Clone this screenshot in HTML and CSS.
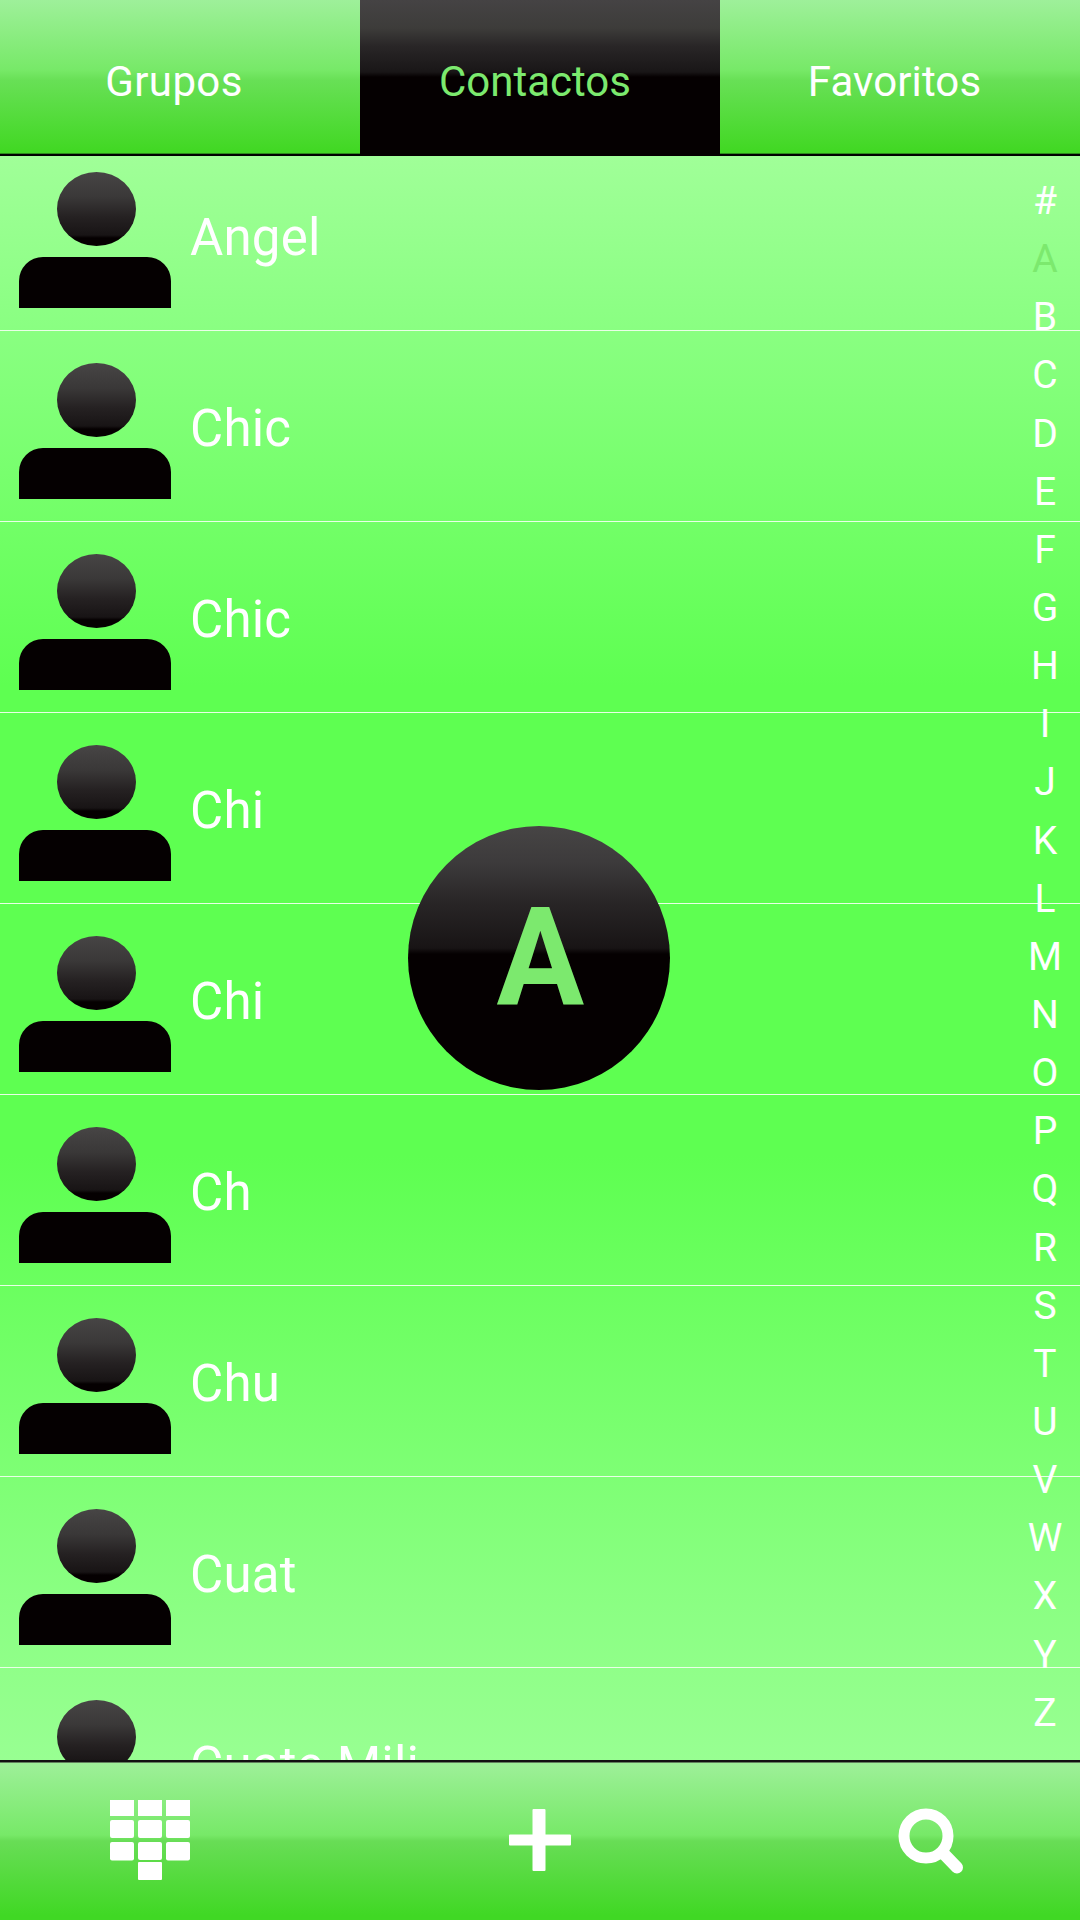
FILE: index.html
```html
<!DOCTYPE html>
<html lang="es">
<head>
    <meta charset="UTF-8">
    <meta name="viewport" content="width=device-width, initial-scale=1.0">
    <title>Contactos</title>
    <link rel="stylesheet" href="styles.css">
</head>

<body>
    <div class="app">
        <nav class="tabs">
            <a class="tab"><span class="grupos">Grupos</span></a>
            <a class="tab active"><span class="contactos">Contactos</span></a>
            <a class="tab"><span class="favoritos">Favoritos</span></a>
        </nav>

        <main class="content">
            <ul class="contacts">
                <li><div class="avatar"><i class="head"></i><i class="torso"></i></div><span>Angel</span></li>
                <li><div class="avatar"><i class="head"></i><i class="torso"></i></div><span>Chic</span></li>
                <li><div class="avatar"><i class="head"></i><i class="torso"></i></div><span>Chic</span></li>
                <li><div class="avatar"><i class="head"></i><i class="torso"></i></div><span>Chi</span></li>
                <li><div class="avatar"><i class="head"></i><i class="torso"></i></div><span>Chi</span></li>
                <li><div class="avatar"><i class="head"></i><i class="torso"></i></div><span>Ch</span></li>
                <li><div class="avatar"><i class="head"></i><i class="torso"></i></div><span>Chu</span></li>
                <li><div class="avatar"><i class="head"></i><i class="torso"></i></div><span>Cuat</span></li>
                <li><div class="avatar"><i class="head"></i><i class="torso"></i></div><span>Cuate Mili</span></li>
            </ul>

            <!-- alphabet index -->
            <ul class="letters">
                <li>#</li>
                <li class="current">A</li>
                <li>B</li>
                <li>C</li>
                <li>D</li>
                <li>E</li>
                <li>F</li>
                <li>G</li>
                <li>H</li>
                <li>I</li>
                <li>J</li>
                <li>K</li>
                <li>L</li>
                <li>M</li>
                <li>N</li>
                <li>O</li>
                <li>P</li>
                <li>Q</li>
                <li>R</li>
                <li>S</li>
                <li>T</li>
                <li>U</li>
                <li>V</li>
                <li>W</li>
                <li>X</li>
                <li>Y</li>
                <li>Z</li>
            </ul>

            <div class="bubble"><span>A</span></div>
        </main>

        <footer class="toolbar">
            <svg width="80" height="80" viewBox="0 0 80 80" fill="#fff">
                <path d="M0 0h24v16H0zM28 0h24v16H28zM56 0h24v16H56z"/>
                <rect x="0" y="20" width="24" height="18" rx="2"/>
                <rect x="28" y="20" width="24" height="18" rx="2"/>
                <rect x="56" y="20" width="24" height="18" rx="2"/>
                <rect x="0" y="42" width="24" height="18.5" rx="2"/>
                <rect x="28" y="42" width="24" height="18" rx="2"/>
                <rect x="56" y="42" width="24" height="18.5" rx="2"/>
                <rect x="28" y="62" width="24" height="18" rx="1"/>
            </svg>
            <svg width="80" height="80" viewBox="0 0 80 80" fill="#fff">
                <rect x="9" y="34.5" width="62" height="11" rx="1"/>
                <rect x="32.5" y="9" width="13" height="62" rx="1"/>
            </svg>
            <svg width="80" height="80" viewBox="0 0 80 80" fill="none" stroke="#fff">
                <circle cx="36" cy="36" r="22" stroke-width="11"/>
                <path d="M53 53L67 67.5" stroke-width="12" stroke-linecap="round"/>
            </svg>
        </footer>
    </div>
</body>

</html>
```
FILE: styles.css
```css
* {
    margin: 0;
    padding: 0;
    box-sizing: border-box;
}

body {
    font-family: Roboto, "Liberation Sans", sans-serif;
    color: #fff;
}

ul {
    list-style: none;
}

.app {
    width: 1080px;
    height: 1920px;
    display: flex;
    flex-direction: column;
    overflow: hidden;
}

/* top tabs */
.tabs {
    height: 156px;
    display: flex;
    background: linear-gradient(#9ef09a 0, #92ee8a 22px, #77e968 70px, #68e056 80px, #42d824 150px);
}

.tab {
    flex: 1;
    padding-top: 57px;
    border-bottom: 2px solid #000;
    box-shadow: inset 0 -1px #2b8c1a;
    font-size: 42px;
    line-height: 50px;
    text-align: center;
}

.tab span {
    display: inline-block;
}

.grupos {
    letter-spacing: 0.4px;
    margin-right: 12px;
}

.contactos {
    margin-right: 10px;
}

.favoritos {
    letter-spacing: 0.1px;
    margin-right: 11px;
}

.tab.active {
    color: #7ce96e;
    background: linear-gradient(#454344 0, #3d3c3a 28px, #292627 46px, #191617 72px, #050001 77px);
    border-color: #050001;
    box-shadow: none;
}

/* contact list */
.content {
    height: 1604px;
    position: relative;
    overflow: hidden;
    background: linear-gradient(#a0ff98 0, #8aff82 170px, #5eff51 530px, #5eff51 1000px, #8aff82 1440px, #98ff92 1604px);
}

.contacts {
    margin-top: -16px;
}

.contacts li {
    height: 191px;
    display: flex;
    align-items: flex-start;
    padding: 32px 0 0 19px;
    border-bottom: 1px solid #e9ffe7;
}

.contacts span {
    margin: 36px 0 0 19px;
    font-size: 51px;
    line-height: 60px;
    letter-spacing: 0.2px;
}

.avatar {
    width: 152px;
}

.head {
    display: block;
    width: 79px;
    height: 74px;
    margin: 0 auto 11px 37.5px;
    border-radius: 50%;
    background: linear-gradient(#474545 0, #3a3838 25px, #252122 45px, #181415 63px, #050001 66px);
}

.torso {
    display: block;
    height: 51px;
    border-radius: 24px 24px 0 0;
    background: #050001;
}

.letters {
    position: absolute;
    top: 16px;
    right: 0;
    width: 70px;
    font-size: 39px;
    text-align: center;
}

.letters li {
    height: 58.15px;
    line-height: 58.15px;
}

.letters .current {
    color: #7ce96e;
}

.bubble {
    position: absolute;
    top: 670px;
    left: 408px;
    width: 262px;
    height: 264px;
    display: flex;
    justify-content: center;
    border-radius: 50%;
    background: linear-gradient(#474545 0, #3c3a3b 38px, #292627 75px, #181415 122px, #050001 128px);
    color: #7ce96e;
    font-size: 138px;
    font-weight: bold;
    line-height: 264px;
}

.bubble span {
    margin-left: 2px;
    transform: scaleX(0.945);
}

/* bottom bar */
.toolbar {
    height: 160px;
    display: flex;
    justify-content: space-between;
    padding: 38px 110px 0;
    border-top: 2px solid #111;
    box-shadow: inset 0 1px #60805c;
    background: linear-gradient(#9ef09a 0, #92ee8a 22px, #77e968 73px, #68dd56 79px, #40d824 154px);
}
```
